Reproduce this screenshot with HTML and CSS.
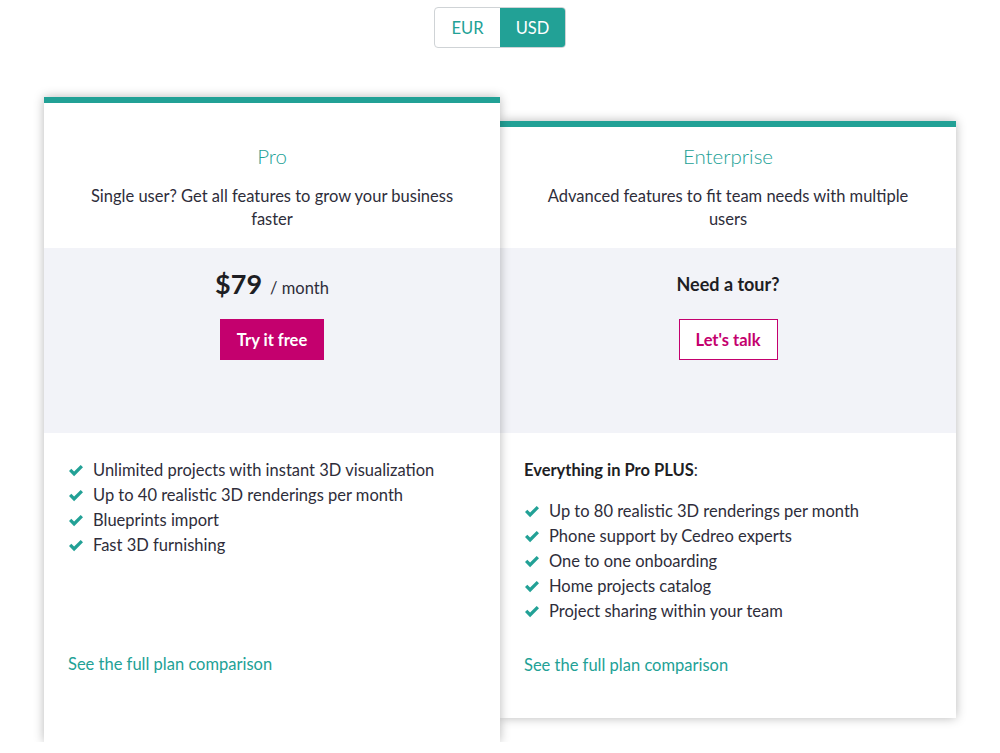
FILE: index.html
```html
<!DOCTYPE html>
<html lang="en">
<head>
<meta charset="utf-8">
<title>Pricing</title>
<link rel="stylesheet" href="styles.css">
</head>
<body>
<div class="page">
  <div class="toggle">
    <span class="toggle-opt">EUR</span>
    <span class="toggle-opt is-active">USD</span>
  </div>

  <div class="plans">
    <div class="card card--featured">
      <div class="card-head">
        <h2 class="card-title">Pro</h2>
        <p class="card-desc">Single user? Get all features to grow your business faster</p>
      </div>
      <div class="card-cta">
        <div class="price"><span class="price-amount">$79</span><span class="price-period">/ month</span></div>
        <a class="btn btn--solid">Try it free</a>
      </div>
      <div class="card-body">
        <ul class="features">
          <li><svg class="check" viewBox="0 0 16 13"><path d="M1 7.1 L3.3 4.8 L6.1 7.6 L12.7 1 L15 3.3 L6.1 12.2 Z"/></svg>Unlimited projects with instant 3D visualization</li>
          <li><svg class="check" viewBox="0 0 16 13"><path d="M1 7.1 L3.3 4.8 L6.1 7.6 L12.7 1 L15 3.3 L6.1 12.2 Z"/></svg>Up to 40 realistic 3D renderings per month</li>
          <li><svg class="check" viewBox="0 0 16 13"><path d="M1 7.1 L3.3 4.8 L6.1 7.6 L12.7 1 L15 3.3 L6.1 12.2 Z"/></svg>Blueprints import</li>
          <li><svg class="check" viewBox="0 0 16 13"><path d="M1 7.1 L3.3 4.8 L6.1 7.6 L12.7 1 L15 3.3 L6.1 12.2 Z"/></svg>Fast 3D furnishing</li>
        </ul>
        <a class="compare">See the full plan comparison</a>
      </div>
    </div>

    <div class="card card--side">
      <div class="card-head">
        <h2 class="card-title">Enterprise</h2>
        <p class="card-desc">Advanced features to fit team needs with multiple users</p>
      </div>
      <div class="card-cta">
        <div class="tour">Need a tour?</div>
        <a class="btn btn--outline">Let's talk</a>
      </div>
      <div class="card-body">
        <p class="plus"><strong>Everything in Pro PLUS</strong>:</p>
        <ul class="features">
          <li><svg class="check" viewBox="0 0 16 13"><path d="M1 7.1 L3.3 4.8 L6.1 7.6 L12.7 1 L15 3.3 L6.1 12.2 Z"/></svg>Up to 80 realistic 3D renderings per month</li>
          <li><svg class="check" viewBox="0 0 16 13"><path d="M1 7.1 L3.3 4.8 L6.1 7.6 L12.7 1 L15 3.3 L6.1 12.2 Z"/></svg>Phone support by Cedreo experts</li>
          <li><svg class="check" viewBox="0 0 16 13"><path d="M1 7.1 L3.3 4.8 L6.1 7.6 L12.7 1 L15 3.3 L6.1 12.2 Z"/></svg>One to one onboarding</li>
          <li><svg class="check" viewBox="0 0 16 13"><path d="M1 7.1 L3.3 4.8 L6.1 7.6 L12.7 1 L15 3.3 L6.1 12.2 Z"/></svg>Home projects catalog</li>
          <li><svg class="check" viewBox="0 0 16 13"><path d="M1 7.1 L3.3 4.8 L6.1 7.6 L12.7 1 L15 3.3 L6.1 12.2 Z"/></svg>Project sharing within your team</li>
        </ul>
        <a class="compare">See the full plan comparison</a>
      </div>
    </div>
  </div>
</div>
</body>
</html>
```

FILE: styles.css
```css
* { box-sizing: border-box; }
html, body { margin: 0; padding: 0; background: #fff; }
body {
  font-family: Lato, "Open Sans", "Liberation Sans", sans-serif;
  font-size: 16.5px;
  color: #2e2d3a;
}
.page {
  width: 1000px;
  padding-top: 7px;
  display: flex;
  flex-direction: column;
  align-items: center;
}
.toggle {
  display: flex;
  height: 41px;
  border: 1px solid #cfd3d6;
  border-radius: 4px;
  overflow: hidden;
}
.toggle-opt {
  width: 65px;
  display: flex;
  align-items: center;
  justify-content: center;
  color: #22a196;
  font-size: 16.5px;
  font-weight: 400;
}
.toggle-opt.is-active {
  background: #22a196;
  color: #fff;
}
.plans {
  margin-top: 49px;
  display: flex;
  align-items: stretch;
  width: 912px;
}
.card {
  width: 456px;
  background: #fff;
  border-top: 6px solid #22a196;
  box-shadow: 0 0 10px rgba(0,0,0,0.28);
  display: flex;
  flex-direction: column;
}
.card--featured { position: relative; z-index: 2; }
.card--side { margin: 24px 0; position: relative; z-index: 1; }
.card-head {
  padding: 15px 36px 17px;
  text-align: center;
}
.card--featured .card-head { padding-top: 39px; }
.card-title {
  margin: 0;
  font-size: 20.5px;
  line-height: 28px;
  font-weight: 300;
  color: #22a196;
}
.card-desc {
  margin: 15px 0 0;
  line-height: 23px;
}
.card-cta {
  height: 185px;
  background: #f2f3f8;
  padding-top: 20px;
  display: flex;
  flex-direction: column;
  align-items: center;
}
.price {
  height: 32px;
  display: flex;
  align-items: baseline;
  justify-content: center;
}
.price-amount {
  font-size: 27px;
  font-weight: 700;
  color: #1e1e24;
  line-height: 32px;
}
.price-period {
  margin-left: 8px;
  font-size: 16.5px;
}
.tour {
  height: 32px;
  line-height: 32px;
  font-size: 18px;
  font-weight: 700;
  color: #1e1e24;
}
.btn {
  margin-top: 19px;
  height: 41px;
  padding: 0 17px;
  display: flex;
  align-items: center;
  font-size: 16.5px;
  font-weight: 700;
}
.btn--solid { background: #c4006e; color: #fff; }
.btn--outline { background: #fff; color: #c4006e; border: 1px solid #c4006e; padding: 0 16px; }
.card-body {
  flex: 1;
  padding: 25px 24px 40px;
  display: flex;
  flex-direction: column;
}
.card--featured .card-body { padding-bottom: 65px; }
.plus {
  margin: 0 0 16px;
  line-height: 25px;
}
.plus strong { font-weight: 700; color: #1e1e24; }
.features {
  list-style: none;
  margin: 0 0 29px;
  padding: 0;
}
.features li {
  display: flex;
  align-items: center;
  line-height: 25px;
}
.check {
  width: 16px;
  height: 13px;
  margin-right: 9px;
  fill: #22a196;
  flex: none;
}
.compare {
  margin-top: auto;
  line-height: 25px;
  color: #22a196;
}
```
